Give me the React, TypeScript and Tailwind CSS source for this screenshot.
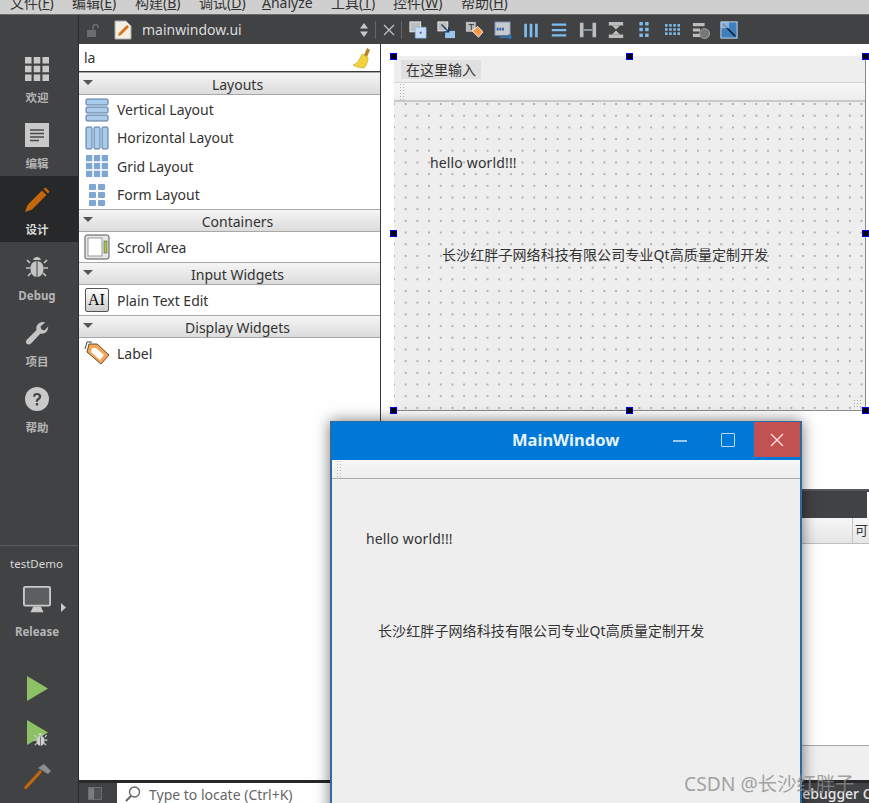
const font = { fontFamily: '"Noto Sans","Noto Sans CJK SC",sans-serif' };

function Grid3({ c = "#c9c9c9", n = 3, m = n, s = 6, g = 2, w, h }: { c?: string; n?: number; m?: number; s?: number; g?: number; w: number; h: number }) {
  const cells = [];
  for (let i = 0; i < n; i++) for (let j = 0; j < m; j++) cells.push(<rect key={`${i}-${j}`} x={j * (s + g)} y={i * (s + g)} width={s} height={s} fill={c} />);
  return <svg width={w} height={h} viewBox={`0 0 ${m * s + (m - 1) * g} ${n * s + (n - 1) * g}`}>{cells}</svg>;
}

function Bug({ c = "#c4c4c4", size = 24 }: { c?: string; size?: number }) {
  return (
    <svg width={size} height={size} viewBox="0 0 24 24">
      <path d="M12 2c2 0 3.500 1 4 3H8c.5-2 2-3 4-3Z" fill={c} />
      <path d="M11.500 6v16C7.500 21.500 5.500 18 5.500 13.500 5.500 9.500 7 7 11.500 6ZM12.500 6c4.500 1 6 3.500 6 7.500 0 4.500-2 8-6 8.500Z" fill={c} />
      <path d="M5 8 2 5M5.500 13H1M6 18l-3 3M19 8l3-3M18.500 13H23M18 18l3 3" stroke={c} strokeWidth="1.700" />
    </svg>
  );
}

const sideIcons = [
  { label: "欢迎", icon: <Grid3 w={24} h={24} /> },
  {
    label: "编辑",
    icon: (
      <svg width="24" height="24" viewBox="0 0 24 24">
        <rect width="24" height="24" fill="#c9c9c9" />
        <path d="M5 7h14M5 10.500h14M5 14h14M5 17.500h9" stroke="#47494b" strokeWidth="1.600" />
      </svg>
    ),
  },
  {
    label: "设计",
    active: true,
    icon: (
      <svg width="26" height="26" viewBox="0 0 26 26">
        <path d="M1 25l2.500-7L18 3.500l4.500 4.500L8 22.500Z" fill="#c5680b" />
        <path d="M19.500 2l2-1.500 4 4L24 6.500Z" fill="#c5680b" />
      </svg>
    ),
  },
  { label: "Debug", icon: <Bug /> },
  {
    label: "项目",
    icon: (
      <svg width="24" height="24" viewBox="0 0 24 24">
        <path d="M23 6.500c0 4-3.500 7-7.500 6L6 22.500c-1.500 1.200-3.300 1.200-4.300.2-1-1-1-2.800.3-4.200L11.500 9C10.500 5 13.500 1 18 1c1 0 1.500.2 2 .4L15.500 5.500l1 3 3 1L23.500 5Z" fill="#c4c4c4" />
      </svg>
    ),
  },
  {
    label: "帮助",
    icon: (
      <svg width="24" height="24" viewBox="0 0 24 24">
        <circle cx="12" cy="12" r="12" fill="#c9c9c9" />
        <path d="M8 9.500C8 7 10 6 12 6c2.500 0 4.200 1.300 4.200 3.400 0 3-3.200 3-3.200 5.300h-2.200c0-3.300 3-3.300 3-5.200 0-1-.8-1.500-1.800-1.500s-1.800.6-1.800 1.800Z" fill="#404244" />
        <rect x="10.800" y="16" width="2.300" height="2.500" fill="#404244" />
      </svg>
    ),
  },
];

function Sidebar() {
  return (
    <aside className="w-[79px] shrink-0 h-full bg-[#404244] flex flex-col border-r border-[#2b2c2e]">
      <div className="h-[29px] shrink-0" />
      {sideIcons.map((it) => (
        <div key={it.label} className={`h-[66px] shrink-0 flex flex-col items-center justify-end pb-[5px] pr-[4px] gap-[10px] ${it.active ? "bg-[#27282a]" : ""}`}>
          {it.icon}
          <span className={`text-[11.500px] leading-[14px] font-bold ${it.active ? "text-[#d8d8d8]" : "text-[#b5b5b5]"}`}>{it.label}</span>
        </div>
      ))}
      <div className="h-[106px] shrink-0 border-b border-[#5a5c5e]" />
      <div className="h-[36px] shrink-0 flex items-end pb-[10px] pl-[10px] text-[11.500px] text-[#d8d8d8]">testDemo</div>
      <div className="h-[32px] shrink-0 flex justify-center items-end pr-[4px] relative">
        <svg width="28" height="28" viewBox="0 0 30 30">
          <rect x="1" y="1" width="28" height="20" rx="1.500" fill="#5c5e60" stroke="#c9c9c9" strokeWidth="2" />
          <path d="M11 22h8l3 6H8Z" fill="#c9c9c9" />
        </svg>
        <svg width="6" height="9" viewBox="0 0 6 9" className="absolute left-[61px] top-[21px]"><path d="M0 0l5 4.500L0 9Z" fill="#c9c9c9" /></svg>
      </div>
      <div className="h-[34px] shrink-0 flex items-center justify-center pt-[2px] pr-[4px] text-[11.500px] font-bold text-[#b5b5b5]">Release</div>
      <div className="h-[18px] shrink-0" />
      <div className="h-[44px] shrink-0 flex justify-center items-center pr-[3px]">
        <svg width="21" height="25" viewBox="0 0 22 26"><path d="M0 0l22 13L0 26Z" fill="#8cc265" /></svg>
      </div>
      <div className="h-[44px] shrink-0 flex justify-center items-center pr-[3px] relative">
        <svg width="21" height="25" viewBox="0 0 22 26"><path d="M0 0l22 13L0 26Z" fill="#8cc265" /></svg>
        <span className="absolute left-[33px] top-[22px]"><Bug c="#d0d0d0" size={15} /></span>
      </div>
      <div className="h-[44px] shrink-0 flex justify-center items-center pr-[3px]">
        <svg width="28" height="28" viewBox="0 0 28 28">
          <path d="M1 26.500 17 9" stroke="#c5680b" strokeWidth="3" />
          <path d="M14 6l6-4 7 7-3 3Z" fill="#8d8d8d" />
        </svg>
      </div>
    </aside>
  );
}

function ToolGlyph({ i }: { i: number }) {
  const blue = "#7fbcea";
  const g = "#bdbdbd";
  const body: Record<number, any> = {
    0: <><rect x="1" y="1" width="12" height="11" fill={g} stroke="#eee" /><rect x="7" y="7" width="12" height="12" fill="#c6dcf3" stroke={blue} strokeDasharray="2 1" /><rect x="12" y="12" width="2" height="2" fill="#2f5f9a" /></>,
    1: <><rect x="1" y="1" width="11" height="10" fill={g} stroke="#eee" /><rect x="9" y="11" width="11" height="8" fill="#9cc4ea" /><path d="M5 4l8 8M13 7v5H8" stroke="#173a66" strokeWidth="1.500" fill="none" /></>,
    2: <><rect x="1" y="1" width="11" height="11" fill={g} /><path d="M4 4h6M7 4v6" stroke="#333" /><path d="M8 11l6-5 6 6-5 6Z" fill="#f09a4a" stroke="#fff" /></>,
    3: <><rect x="1" y="1" width="17" height="15" fill="#c8c8d0" stroke="#667fa6" /><path d="M3 9h2M6 9h2M9 9h2" stroke="#2d5ea8" strokeWidth="3" /><path d="M6 18h13M16 15l3 3-3 3" stroke="#2f78c0" strokeWidth="1.500" fill="none" /></>,
    4: <path d="M4 3v15M10 3v15M16 3v15" stroke={blue} strokeWidth="3" />,
    5: <path d="M2 4h16M2 10h16M2 16h16" stroke={blue} strokeWidth="2.500" />,
    6: <><path d="M3 2v16M17 2v16" stroke={g} strokeWidth="4" /><path d="M5 10h10" stroke="#8f9da8" strokeWidth="2" /></>,
    7: <><path d="M2 3h16M2 17h16" stroke={g} strokeWidth="4" /><path d="M6 5l4 4 4-4M6 15l4-4 4 4" fill={g} stroke={g} /></>,
    10: <><path d="M1 4h13M1 10h8M1 16h8" stroke={g} strokeWidth="3.500" /><circle cx="14" cy="14" r="5.500" fill="#777" stroke="#aaa" /></>,
    11: <><rect x="1" y="1" width="18" height="18" fill="#3f7fbf" stroke="#cfe0f0" /><path d="M3 3l14 14" stroke="#10293f" strokeWidth="2" /><path d="M1 1h9v7H1Z" fill="#bcd7ef" opacity=".6" /></>,
  };
  if (i === 8) return <Grid3 n={3} m={2} s={3} g={2} w={10} h={15} c={blue} />;
  if (i === 9) return <Grid3 n={3} m={4} s={2.500} g={1.500} w={15} h={11} c={blue} />;
  return <svg width="18" height="18" viewBox="0 0 20 20">{body[i]}</svg>;
}

function Handle({ cls }: { cls: string }) {
  return <span className={`absolute w-[7px] h-[7px] bg-black border border-[#0000ff] ${cls}`} />;
}

function WindowBody({ pad, left }: { pad: string; left: string }) {
  return (
    <div className={`flex flex-col text-[14px] leading-[20px] text-[#333] ${pad} ${left}`}>
      <div className="ml-[36px] tracking-[0.150px]">hello world!!!</div>
      <div className="ml-[48px] mt-[72px] tracking-[0.100px]">长沙红胖子网络科技有限公司专业Qt高质量定制开发</div>
    </div>
  );
}

function Category({ title }: { title: string }) {
  return (
    <div className="h-[23px] shrink-0 flex items-center relative justify-center pl-[16px] pt-[2px] bg-gradient-to-b from-[#f5f5f5] to-[#dcdcdc] border-y border-[#a8a8a8] text-[14px] text-[#333]">
      <svg width="10" height="6" viewBox="0 0 10 6" className="absolute left-[4px] top-[7px]"><path d="M0 0h10L5 5Z" fill="#555" /></svg>
      {title}
    </div>
  );
}

function LayoutIcon({ kind }: { kind: string }) {
  const b = "#55779c";
  const f = "#a9cbec";
  if (kind === "v")
    return <svg width="24" height="24" viewBox="0 0 24 24"><rect x="1" y="1" width="22" height="6" rx="1" fill={f} stroke={b} /><rect x="1" y="9" width="22" height="6" rx="1" fill={f} stroke={b} /><rect x="1" y="17" width="22" height="6" rx="1" fill={f} stroke={b} /></svg>;
  if (kind === "h")
    return <svg width="24" height="24" viewBox="0 0 24 24"><rect x="1" y="1" width="6" height="22" rx="1" fill={f} stroke={b} /><rect x="9" y="1" width="6" height="22" rx="1" fill={f} stroke={b} /><rect x="17" y="1" width="6" height="22" rx="1" fill={f} stroke={b} /></svg>;
  if (kind === "g") return <Grid3 n={3} s={6} g={1.500} w={22} h={22} c="#7ea6d2" />;
  if (kind === "f") return <svg width="16" height="22" viewBox="0 0 16 22">{[0, 8, 16].flatMap((y) => [0, 9].map((x) => <rect key={`${x}${y}`} x={x} y={y} width="7" height="6" rx="1" fill="#7ea6d2" />))}</svg>;
  if (kind === "s")
    return <svg width="26" height="26" viewBox="0 0 26 26"><rect x="1" y="1" width="24" height="24" rx="2" fill="#e6e6e6" stroke="#555" /><rect x="4" y="4" width="14" height="18" fill="#fff" stroke="#999" /><rect x="20" y="7" width="3" height="12" fill="#a5c94a" stroke="#444" strokeWidth=".5" /></svg>;
  if (kind === "a")
    return <div className="w-[24px] h-[24px] rounded-[2px] border border-[#555] bg-gradient-to-b from-[#fff] to-[#ccc] flex items-center justify-center text-[16px] text-black" style={{ fontFamily: '"Liberation Serif",serif' }}>AI</div>;
  return <svg width="26" height="24" viewBox="0 0 26 24"><path d="M5 3h8l12 11-8 9L3 11Z" fill="#f3a559" stroke="#6d4a21" /><path d="M8 7h4l8 7-4 5L7 11Z" fill="#fff" /><path d="M1 8 3 1h5" stroke="#444" fill="none" /></svg>;
}

function Row({ kind, text, h }: { kind: string; text: string; h: string }) {
  return (
    <div className={`${h} shrink-0 flex items-center text-[14px] text-[#333]`}>
      <span className="w-[38px] flex justify-center pr-[3px]"><LayoutIcon kind={kind} /></span>
      {text}
    </div>
  );
}

const menus: [string, string, string][] = [
  ["文件(", "F", ")"], ["编辑(", "E", ")"], ["构建(", "B", ")"], ["调试(", "D", ")"], ["", "A", "nalyze"], ["工具(", "T", ")"], ["控件(", "W", ")"], ["帮助(", "H", ")"],
];
const menuW = ["w-[62px]", "w-[63px]", "w-[64px]", "w-[63px]", "w-[69px]", "w-[62px]", "w-[68px]", "w-[60px]"];

export default function App() {
  return (
    <div className="w-[869px] h-[803px] overflow-hidden flex flex-col relative bg-white" style={font}>
      <header className="h-[15px] shrink-0 bg-[#cfcfcf] border-b border-[#6a6a6a] flex items-end pl-[10px] overflow-hidden">
        {menus.map((m, i) => (
          <span key={m[1]} className={`${menuW[i]} shrink-0 text-[14px] leading-[18px] mb-[2px] text-[#333] whitespace-nowrap`}>
            {m[0]}<span className="underline">{m[1]}</span>{m[2]}
          </span>
        ))}
      </header>
      <div className="flex-1 flex min-h-0">
        <Sidebar />
        <main className="flex-1 min-w-0 flex flex-col">
          <div className="h-[29px] shrink-0 bg-[#404244] flex items-center text-[14px] text-[#dcdcdc]">
            <svg width="14" height="14" viewBox="0 0 14 14" className="ml-[7px]">
              <rect x="1" y="7" width="9" height="7" fill="#6a6c6e" />
              <path d="M7 7V4a2.500 2.500 0 0 1 5 0v1" stroke="#6a6c6e" strokeWidth="1.500" fill="none" />
            </svg>
            <svg width="20" height="20" viewBox="0 0 20 20" className="ml-[13px]">
              <path d="M2 1h11l5 5v13H2Z" fill="#f3efe2" stroke="#aaa" />
              <path d="M5 16l1-3 8-8 2 2-8 8Z" fill="#d9731a" />
            </svg>
            <span className="ml-[9px]">mainwindow.ui</span>
            <svg width="10" height="16" viewBox="0 0 10 16" className="ml-[117px]"><path d="M1 6.500 5 1l4 5.500ZM1 9.500 5 15l4-5.500Z" fill="#c9c9c9" /></svg>
            <span className="w-px h-[18px] bg-[#666] ml-[6px]" />
            <svg width="12" height="12" viewBox="0 0 12 12" className="ml-[7px]"><path d="M1 1l10 10M11 1 1 11" stroke="#c4c4c4" strokeWidth="1.200" /></svg>
            <span className="w-px h-[18px] bg-[#666] ml-[6px]" />
            <div className="flex items-center ml-[2px]">
              {Array.from({ length: 12 }, (_, i) => (
                <span key={i} className="w-[28.300px] flex justify-center"><ToolGlyph i={i} /></span>
              ))}
            </div>
          </div>
          <div className="flex-1 min-h-0 flex">
            <section className="w-[302px] shrink-0 flex flex-col bg-white border-r border-[#3a3a3a]">
              <div className="h-[28px] shrink-0 flex items-center justify-between px-[5px] pr-[8px] border-b border-[#3a3a3a] text-[14px] text-[#333]">
                la
                <svg width="20" height="22" viewBox="0 0 20 22">
                  <path d="M15 1l3 2-3 7-3-2Z" fill="#b9822c" />
                  <path d="M10 7l6 3.500c0 4-2 9-4 10.500-3 0-8-1-11-3 4-1 7-6 9-11Z" fill="#f2d33b" stroke="#c4a020" strokeWidth=".6" />
                </svg>
              </div>
              <Category title="Layouts" />
              <div className="flex flex-col h-[114px] shrink-0 pt-[0.5px]">
                <Row kind="v" text="Vertical Layout" h="h-[28.300px]" />
                <Row kind="h" text="Horizontal Layout" h="h-[28.300px]" />
                <Row kind="g" text="Grid Layout" h="h-[28.300px]" />
                <Row kind="f" text="Form Layout" h="h-[28.300px]" />
              </div>
              <Category title="Containers" />
              <Row kind="s" text="Scroll Area" h="h-[30px]" />
              <Category title="Input Widgets" />
              <Row kind="a" text="Plain Text Edit" h="h-[30px]" />
              <Category title="Display Widgets" />
              <Row kind="l" text="Label" h="h-[30px]" />
            </section>
            <section className="flex-1 min-w-0 flex flex-col">
              <div className="h-[445px] shrink-0 pl-[13px] pt-[12px] overflow-hidden relative">
                <div className="w-[472px] h-[355px] flex flex-col bg-[#eeeeee] border-b border-r border-[#8a8a8a]">
                  <div className="h-[27px] shrink-0 bg-[#eeeeee] border-b border-[#d4d4d4] flex items-center pl-[7px]">
                    <span className="h-[19px] px-[5px] bg-[#e0e0e0] text-[14px] leading-[19px] text-[#333]">在这里输入</span>
                  </div>
                  <div className="h-[19px] shrink-0 bg-gradient-to-b from-[#f8f8f8] to-[#eeeeee] border-b-2 border-[#c8c8c8] pl-[5px]">
                    <div className="w-[6px] h-full bg-[radial-gradient(#b0b0b0_1px,transparent_1px)] bg-[length:3px_3px]" />
                  </div>
                  <div className="flex-1 bg-[radial-gradient(#b0b0b0_0.7px,transparent_0.8px)] bg-[length:11.700px_11.700px] bg-[position:-5.850px_-3.850px]">
                    <WindowBody pad="pt-[51px]" left="" />
                  </div>
                </div>
                <span className="absolute left-[472px] top-[355px] w-[10px] h-[9px] bg-[radial-gradient(#a8a8a8_1px,transparent_1px)] bg-[length:3px_3px]" />
                <Handle cls="left-[9px] top-[9px]" />
                <Handle cls="left-[245px] top-[9px]" />
                <Handle cls="left-[481px] top-[9px]" />
                <Handle cls="left-[9px] top-[186px]" />
                <Handle cls="left-[481px] top-[186px]" />
                <Handle cls="left-[9px] top-[363px]" />
                <Handle cls="left-[245px] top-[363px]" />
                <Handle cls="left-[481px] top-[363px]" />
              </div>
              <div className="h-[29px] shrink-0 bg-[#404244] border-t-2 border-[#55575a] flex justify-end items-center">
                <span className="w-[2px] h-[26px] bg-white" />
              </div>
              <div className="h-[26px] shrink-0 bg-gradient-to-b from-[#f6f6f6] to-[#e6e6e6] border-b border-[#bdbdbd] flex justify-end">
                <span className="w-[17px] border-l border-[#c4c4c4] text-[13px] leading-[24px] pl-[2px] text-[#333] overflow-hidden">可</span>
              </div>
              <div className="flex-1 bg-white" />
              <div className="h-[35px] shrink-0 bg-[#efefef] border-t border-[#a8a8a8]" />
            </section>
          </div>
          <footer className="h-[23px] shrink-0 bg-[#404244] border-t-[3px] border-[#27282a] flex items-center overflow-hidden relative">
            <span className="ml-[9px] w-[14px] h-[13px] shrink-0 bg-[#505254] border border-[#6a6c6e] flex">
              <span className="w-[5px] bg-[#7a7c7e]" />
            </span>
            <div className="ml-[15px] w-[300px] h-[22px] mt-[2px] bg-white flex items-center pl-[7px] text-[14px] text-[#666] shrink-0">
              <svg width="18" height="18" viewBox="0 0 18 18" className="mr-[7px]">
                <circle cx="10.500" cy="7" r="5" fill="none" stroke="#666" strokeWidth="1.400" />
                <path d="M7 11l-5 5" stroke="#666" strokeWidth="2" />
              </svg>
              Type to locate (Ctrl+K)
            </div>
            <span className="ml-[375px] shrink-0 text-[14px] font-medium text-[#e8e8e8] whitespace-nowrap">Debugger Console</span>
          </footer>
        </main>
      </div>

      <div className="absolute left-[330px] top-[421px] w-[472px] h-[400px] bg-[#eeeeee] border-x-2 border-t border-[#2f6a9c] shadow-[0_0_14px_rgba(0,0,0,0.55)] flex flex-col">
        <div className="h-[38px] shrink-0 bg-[#0078d7] relative flex items-center">
          <span className="absolute left-[180px] top-[7px] text-[16.500px] leading-[22px] font-bold text-[#e6f2fb]">MainWindow</span>
          <svg width="14" height="2" viewBox="0 0 14 2" className="absolute left-[341px] top-[18px]"><path d="M0 1h14" stroke="#cfe6f8" strokeWidth="1.500" /></svg>
          <span className="absolute left-[389px] top-[11px] w-[14px] h-[14px] border-[1.500px] border-[#bcdcf4] rounded-[1px]" />
          <div className="absolute right-0 top-0 w-[46px] h-[35px] bg-[#c25252] flex items-center justify-center">
            <svg width="14" height="14" viewBox="0 0 14 14"><path d="M1 1l12 12M13 1 1 13" stroke="#f3e3e3" strokeWidth="1.400" /></svg>
          </div>
        </div>
        <div className="h-[19px] shrink-0 bg-gradient-to-b from-[#f7f7f7] to-[#eeeeee] border-b border-[#ababab] pl-[4px]">
          <div className="w-[6px] h-full bg-[radial-gradient(#b8b8b8_1px,transparent_1px)] bg-[length:3px_3px]" />
        </div>
        <WindowBody pad="pt-[50px]" left="-ml-[2px]" />
      </div>

      <div className="absolute left-[684px] top-[772px] text-[19.300px] leading-[24px] text-[#8c8c8c]/80 whitespace-nowrap">CSDN @长沙红胖子</div>
    </div>
  );
}
